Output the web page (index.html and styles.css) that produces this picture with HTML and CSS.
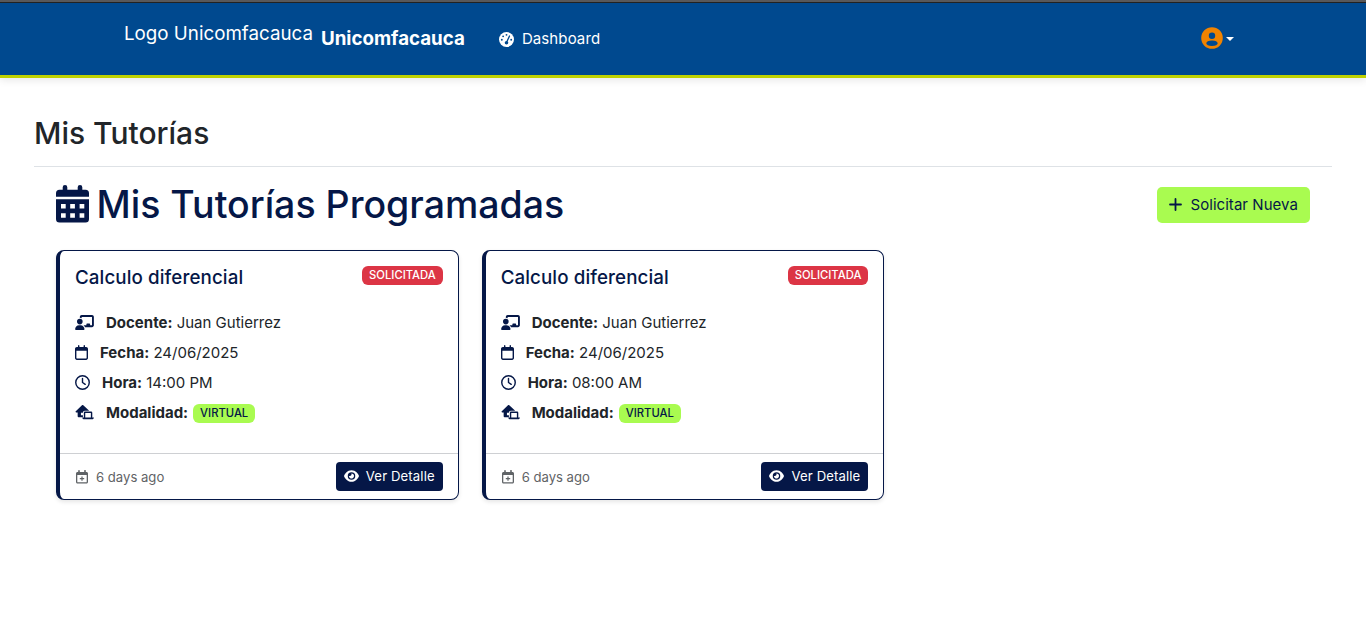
FILE: index.html
```
<!DOCTYPE html>
<html lang="es">
<head>
<meta charset="utf-8">
<title>Mis Tutorías</title>
<link rel="stylesheet" href="styles.css">
</head>
<body>
<svg class="sprite" aria-hidden="true">
  <symbol id="calendar-days" viewBox="0 0 33 38"><path fill-rule="evenodd" d="M9 0a2.300 2.300 0 0 1 2.300 2.300V4.700h10.400V2.300a2.300 2.300 0 0 1 4.600 0V4.700h3.200a3.500 3.500 0 0 1 3.500 3.500v3.600H0V8.200a3.500 3.500 0 0 1 3.500-3.500h3.200V2.300A2.300 2.300 0 0 1 9 0zM0 14.200h33v19.700a3.500 3.500 0 0 1-3.500 3.500h-26A3.500 3.500 0 0 1 0 33.900zM5 19v4.500h4.700V19zm9.200 0v4.500h4.700V19zm9.400 0v4.500h4.700V19zM5 28.300v4.500h4.700v-4.500zm9.200 0v4.500h4.700v-4.500zm9.400 0v4.500h4.700v-4.500z"/></symbol>
  <symbol id="teacher" viewBox="0 0 640 512"><path d="M160 64c0-35.300 28.700-64 64-64H576c35.300 0 64 28.700 64 64V352c0 35.300-28.700 64-64 64H336.800c-11.800-25.500-29.900-47.500-52.400-64H384V320c0-17.700 14.300-32 32-32h64c17.700 0 32 14.300 32 32v32h64V64H224v49.100C205.200 102.200 183.300 96 160 96zm0 64a96 96 0 1 1 0 192 96 96 0 1 1 0-192zM133.300 352h53.300C260.300 352 320 411.700 320 485.300c0 14.700-11.900 26.700-26.700 26.700H26.700C11.900 512 0 500.100 0 485.300 0 411.700 59.700 352 133.300 352z"/></symbol>
  <symbol id="calendar" viewBox="0 0 448 512"><path fill-rule="evenodd" d="M128 0c13.300 0 24 10.700 24 24v40h144V24a24 24 0 0 1 48 0v40h40c35.300 0 64 28.700 64 64v320c0 35.300-28.700 64-64 64H64c-35.300 0-64-28.700-64-64V128c0-35.300 28.700-64 64-64h40V24c0-13.300 10.700-24 24-24zm272 192H48v256c0 8.800 7.200 16 16 16h320c8.800 0 16-7.200 16-16z"/></symbol>
  <symbol id="clock" viewBox="0 0 16 16"><circle cx="8" cy="8" r="7.200" fill="none" stroke="currentColor" stroke-width="1.500"/><path d="M8 3.800V8l2.900 2" fill="none" stroke="currentColor" stroke-width="1.500" stroke-linecap="round"/></symbol>
  <symbol id="house-laptop" viewBox="0 0 20 16"><path fill-rule="evenodd" d="M7.300.3a1 1 0 0 1 1.400 0L15 6H10.300A2 2 0 0 0 8.300 8v.2H6.200v2.600h2.100V13H3.700a1 1 0 0 1-1-1V8H1.200a.8.8 0 0 1-.5-1.400z"/><path fill-rule="evenodd" d="M9.300 8.200A1.200 1.200 0 0 1 10.500 7h6.600a1.200 1.200 0 0 1 1.200 1.200v5.100H20c0 1-.8 1.900-1.900 1.900H9.500c-1 0-1.900-.9-1.900-1.900h1.700zm1.500.3v4.800h6V8.500z"/></symbol>
  <symbol id="calendar-plus" viewBox="0 0 14 14"><path fill-rule="evenodd" d="M4 0c.5 0 .8.300.8.700V2h4.400V.7a.8.8 0 0 1 1.600 0V2h.7c.8 0 1.500.7 1.500 1.500V12c0 .8-.7 1.500-1.500 1.500h-9C1.700 13.500 1 12.800 1 12V3.500C1 2.700 1.700 2 2.500 2h.7V.7C3.200.3 3.500 0 4 0zM2.300 5v7c0 .2.100.3.300.3h8.800c.2 0 .3-.1.3-.3V5zM6.400 6.400h1.200V8h1.600v1.200H7.600v1.600H6.400V9.200H4.800V8h1.600z"/></symbol>
  <symbol id="eye" viewBox="0 0 576 512"><path d="M288 32c-80.800 0-145.500 36.800-192.600 80.600C48.600 156 17.300 208 2.500 243.700c-3.300 7.900-3.300 16.700 0 24.600C17.300 304 48.600 356 95.400 399.400C142.500 443.200 207.200 480 288 480s145.500-36.800 192.600-80.600c46.800-43.500 78.100-95.400 93-131.100c3.300-7.900 3.300-16.700 0-24.600c-14.900-35.700-46.200-87.700-93-131.100C433.500 68.800 368.800 32 288 32zM144 256a144 144 0 1 1 288 0 144 144 0 1 1 -288 0zm144-64c0 35.300-28.700 64-64 64c-7.100 0-13.900-1.200-20.300-3.300c-5.500-1.800-11.900 1.600-11.700 7.400c.3 6.900 1.300 13.800 3.200 20.700c13.700 51.200 66.400 81.600 117.600 67.900s81.600-66.400 67.900-117.600c-11.100-41.500-47.800-69.400-88.600-71.100c-5.800-.2-9.200 6.100-7.400 11.700c2.100 6.400 3.300 13.200 3.300 20.300z"/></symbol>
</svg>

<header class="navbar">
  <a class="brand"><span class="brand-logo">Logo Unicomfacauca</span><strong class="brand-name">Unicomfacauca</strong></a>
  <a class="nav-link">
    <svg class="gauge" viewBox="0 0 16 16"><circle cx="8" cy="8" r="8" fill="#fff"/><g fill="#00498f"><circle cx="8" cy="3" r="1"/><circle cx="4.400" cy="4.600" r="1"/><circle cx="3" cy="8.200" r="1"/><circle cx="13" cy="8.200" r="1"/><circle cx="8" cy="11.500" r="1.900"/></g><path d="M8 11.300 11.200 4.300" stroke="#00498f" stroke-width="1.400" stroke-linecap="round"/></svg>
    <span>Dashboard</span>
  </a>
  <a class="user-menu">
    <svg class="avatar" viewBox="0 0 22 22"><path fill="#f08300" fill-rule="evenodd" d="M11 .2a10.800 10.800 0 1 1 0 21.600 10.800 10.800 0 0 1 0-21.600zm0 5.400a3.200 3.200 0 1 0 0 6.400 3.200 3.200 0 0 0 0-6.400zm0 8c-3.500 0-5.700 1.300-5.700 2.700S7.500 19 11 19s5.700-1.300 5.700-2.700-2.200-2.700-5.700-2.700z"/></svg>
    <span class="caret"></span>
  </a>
</header>

<main class="page">
  <h2 class="page-title">Mis Tutorías</h2>
  <section class="content">
    <div class="section-head">
      <h1 class="section-title"><svg class="title-icon"><use href="#calendar-days"/></svg><span>Mis Tutorías Programadas</span></h1>
      <button class="btn-new"><svg class="plus" viewBox="0 0 13 13"><path d="M6.500 1v11M1 6.500h11" stroke="currentColor" stroke-width="1.800" stroke-linecap="round"/></svg><span>Solicitar Nueva</span></button>
    </div>
    <div class="cards">
      <article class="card">
        <div class="card-body">
          <div class="card-top"><h5 class="card-title">Calculo diferencial</h5><span class="badge badge-red">SOLICITADA</span></div>
          <p class="row"><svg class="icon wide"><use href="#teacher"/></svg><span><b>Docente:</b> Juan Gutierrez</span></p>
          <p class="row"><svg class="icon narrow"><use href="#calendar"/></svg><span><b>Fecha:</b> 24/06/2025</span></p>
          <p class="row"><svg class="icon"><use href="#clock"/></svg><span><b>Hora:</b> 14:00 PM</span></p>
          <p class="row"><svg class="icon wide"><use href="#house-laptop"/></svg><b>Modalidad:</b><span class="badge badge-green">VIRTUAL</span></p>
        </div>
        <footer class="card-footer"><small class="ago"><svg class="ago-icon"><use href="#calendar-plus"/></svg><span>6 days ago</span></small><button class="btn-detail"><svg class="eye"><use href="#eye"/></svg><span>Ver Detalle</span></button></footer>
      </article>
      <article class="card">
        <div class="card-body">
          <div class="card-top"><h5 class="card-title">Calculo diferencial</h5><span class="badge badge-red">SOLICITADA</span></div>
          <p class="row"><svg class="icon wide"><use href="#teacher"/></svg><span><b>Docente:</b> Juan Gutierrez</span></p>
          <p class="row"><svg class="icon narrow"><use href="#calendar"/></svg><span><b>Fecha:</b> 24/06/2025</span></p>
          <p class="row"><svg class="icon"><use href="#clock"/></svg><span><b>Hora:</b> 08:00 AM</span></p>
          <p class="row"><svg class="icon wide"><use href="#house-laptop"/></svg><b>Modalidad:</b><span class="badge badge-green">VIRTUAL</span></p>
        </div>
        <footer class="card-footer"><small class="ago"><svg class="ago-icon"><use href="#calendar-plus"/></svg><span>6 days ago</span></small><button class="btn-detail"><svg class="eye"><use href="#eye"/></svg><span>Ver Detalle</span></button></footer>
      </article>
    </div>
  </section>
</main>
</body>
</html>
```
FILE: styles.css
```
* { box-sizing: border-box; }
body { margin: 0; min-height: 624px; background: #fff; color: #212529; font: 400 15px/22px Inter, "Liberation Sans", sans-serif; }
h1, h2, h5, p { margin: 0; }
svg { fill: currentColor; flex: none; }
button { border: 0; font-family: inherit; }
.sprite { display: none; }

.navbar { height: 78px; display: flex; align-items: center; padding: 0 132px 0 124px; background: linear-gradient(#58585a 2px, #222 2px, #222 3px, #00498f 3px); border-bottom: 3px solid #bfd200; box-shadow: 0 2px 8px rgba(0, 0, 0, .1); color: #fff; }
.brand { display: flex; align-items: center; gap: 8px; font-size: 18.750px; line-height: 28px; padding-top: 2px; }
.brand-logo { font-weight: 400; padding-bottom: 10px; }
.brand-name { font-weight: 700; }
.nav-link { display: flex; align-items: center; gap: 8px; margin-left: 34px; padding-top: 3px; letter-spacing: .1px; }
.gauge { width: 15px; height: 15px; }
.user-menu { display: flex; align-items: center; gap: 3px; margin-left: auto; padding-top: 1px; }
.avatar { width: 22px; height: 22px; }
.caret { border: 4px solid transparent; border-top-color: #fff; border-bottom: 0; margin-top: 1px; }

.page { padding: 32px 34px 0; }
.page-title { height: 57px; border-bottom: 1px solid #dee2e6; font-size: 30px; font-weight: 500; line-height: 46px; }
.content { padding: 15px 22px 0; }
.section-head { display: flex; justify-content: space-between; align-items: center; height: 46px; }
.section-title { display: flex; align-items: center; gap: 7.500px; color: #051747; font-size: 37.500px; font-weight: 500; line-height: 46px; }
.title-icon { width: 33px; height: 38px; margin-top: -2px; }
.btn-new { display: flex; align-items: center; gap: 8px; height: 36px; padding: 0 12px 1px; border-radius: 5px; background: #a9fb50; color: #051747; font-size: 15px; letter-spacing: .05px; }
.plus { width: 13px; height: 13px; }

.cards { display: grid; grid-template-columns: repeat(3, 1fr); gap: 22.900px; margin-top: 22px; }
.card { display: flex; flex-direction: column; height: 250px; border: 1px solid #051747; border-left-width: 4px; border-radius: 8px; background: #fff; box-shadow: 0 2px 4px rgba(0, 0, 0, .1); }
.card-body { flex: 1; padding: 15px 15px 0; }
.card-top { display: flex; justify-content: space-between; align-items: flex-start; height: 41px; }
.card-title { color: #051747; font-size: 18.750px; font-weight: 500; line-height: 24px; letter-spacing: .1px; }
.badge { display: inline-flex; align-items: center; height: 19px; padding: 0 7px; border-radius: 6px; font-size: 11.250px; line-height: 19px; font-weight: 500; }
.badge-red { background: #dc3545; color: #fff; }
.badge-green { margin: 2px 0 0 5px; padding-top: 1px; background: #a9fb50; color: #051747; }
.row { display: flex; align-items: center; height: 30px; }
.row > span:not(.badge), .row > b { padding-top: 2px; }
.icon { width: 15px; height: 15px; margin-right: 12px; color: #051747; }
.wide { width: 19px; }
.narrow { width: 13px; }
.card-footer { display: flex; align-items: center; justify-content: space-between; height: 46px; padding: 0 15px; border-top: 1px solid #ced0d3; }
.ago { display: flex; align-items: center; gap: 7px; color: #5f6366; font-size: 13.125px; }
.ago-icon { width: 14px; height: 14px; }
.btn-detail { display: flex; align-items: center; gap: 7px; height: 29px; padding: 0 8px 1px; border-radius: 4px; background: #051747; color: #fff; font-size: 13.125px; letter-spacing: .13px; }
.eye { width: 15px; height: 14px; }
```
